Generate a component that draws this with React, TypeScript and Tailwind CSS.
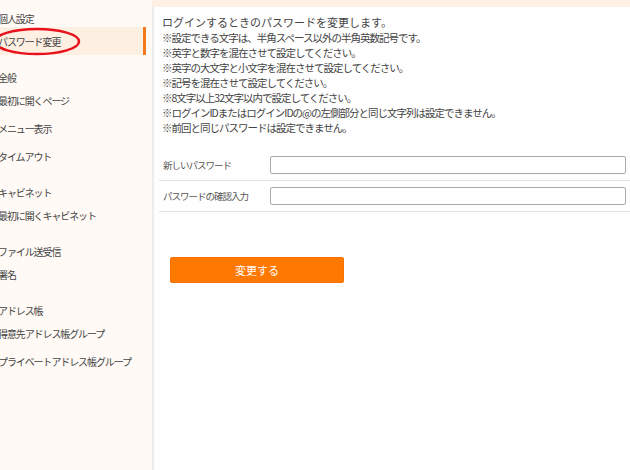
import React from "react";

const font = { fontFamily: '"Noto Sans CJK JP", "Noto Sans", sans-serif' };

type Section = { title: string; items: string[] };

const sections: Section[] = [
  { title: "個人設定", items: ["パスワード変更"] },
  { title: "全般", items: ["最初に開くページ", "メニュー表示", "タイムアウト"] },
  { title: "キャビネット", items: ["最初に開くキャビネット"] },
  { title: "ファイル送受信", items: ["署名"] },
  { title: "アドレス帳", items: ["得意先アドレス帳グループ", "プライベートアドレス帳グループ"] },
];

const notes = [
  "※設定できる文字は、半角スペース以外の半角英数記号です。",
  "※英字と数字を混在させて設定してください。",
  "※英字の大文字と小文字を混在させて設定してください。",
  "※記号を混在させて設定してください。",
  "※8文字以上32文字以内で設定してください。",
  "※ログインIDまたはログインIDの@の左側部分と同じ文字列は設定できません。",
  "※前回と同じパスワードは設定できません。",
];

export default function App() {
  return (
    <div
      className="relative flex w-[630px] h-[470px] overflow-hidden bg-[#fefefe] text-[#444]"
      style={font}
    >
      {/* Sidebar */}
      <aside className="w-[152px] shrink-0 h-full bg-[#fffaf5] pt-[9px] pr-[6px] overflow-hidden">
        {sections.map((s, si) => (
          <div key={s.title} className={si === 0 ? "" : "mt-[13px]"}>
            <div className="h-[18px] flex items-center text-[10px] tracking-[-1.1px] ml-[-2px] whitespace-nowrap">
              {s.title}
            </div>
            {s.items.map((it) => {
              const active = it === "パスワード変更";
              return (
                <div
                  key={it}
                  className={
                    active
                      ? "h-[28px] flex items-center justify-between bg-[#fdefe2]"
                      : "h-[28px] flex items-center"
                  }
                >
                  <span className="text-[10px] tracking-[-1.1px] ml-[-2px] whitespace-nowrap">{it}</span>
                  {active && <span className="w-[3px] h-full bg-[#f27a1c]" />}
                </div>
              );
            })}
          </div>
        ))}
      </aside>

      {/* Main */}
      <main className="flex-1 flex flex-col h-full">
        <div className="h-[7px] bg-[#fff0e3] shrink-0" />
        <div className="flex-1 border-l-2 border-[#ececec]">
          <div className="pl-[8px] pt-[8px] leading-[15px] text-[#444]">
            <div className="text-[11px] whitespace-nowrap">ログインするときのパスワードを変更します。</div>
            {notes.map((n) => (
              <div key={n} className="text-[10.5px] tracking-[-1px] whitespace-nowrap">
                {n}
              </div>
            ))}
          </div>

          <div className="mt-[15px] ml-[5px]">
            {["新しいパスワード", "パスワードの確認入力"].map((l) => (
              <div
                key={l}
                className="h-[31px] flex items-center border-b border-[#e2e2e2] pr-[4px]"
              >
                <div className="w-[111px] pl-[4px] text-[9.5px] tracking-[-1px] text-[#555] whitespace-nowrap">
                  {l}
                </div>
                <div className="flex-1 h-[18px] border border-[#a8a8a8] rounded-[2px] bg-white" />
              </div>
            ))}
          </div>

          <div className="mt-[45px] ml-[16px]">
            <button className="w-[174px] h-[26px] bg-[#ff7800] border border-[#f57200] rounded-[2px] text-white text-[11px] flex items-center justify-center">
              変更する
            </button>
          </div>
        </div>
      </main>

      {/* red annotation ellipse */}
      <svg
        className="absolute left-0 top-0 pointer-events-none"
        width="120"
        height="70"
        viewBox="0 0 120 70"
      >
        <ellipse cx="37" cy="41.5" rx="42" ry="12.5" fill="none" stroke="#e8121c" strokeWidth="2.5" />
      </svg>
    </div>
  );
}
